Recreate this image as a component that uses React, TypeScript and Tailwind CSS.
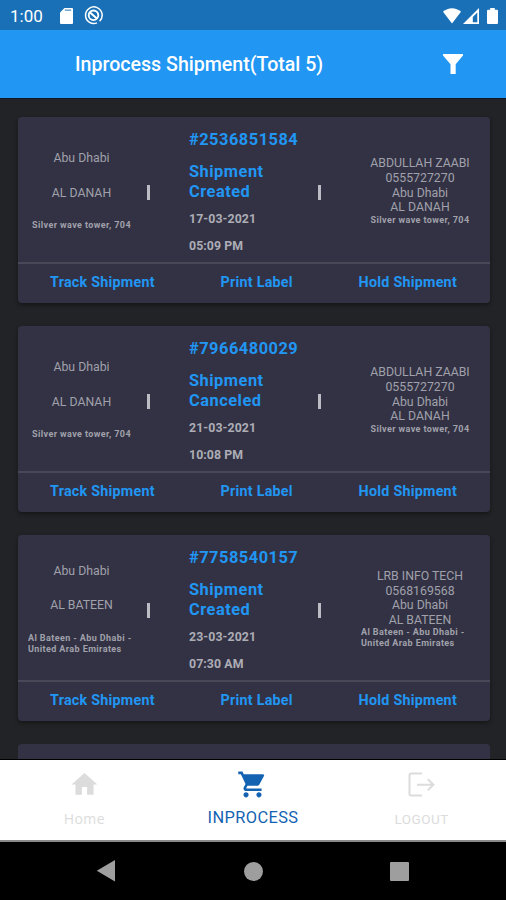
import React from 'react';
import { MdHome, MdShoppingCart } from 'react-icons/md';

interface Shipment {
  id: string;
  status: string;
  date: string;
  time: string;
  from: { city: string; area: string; address: string };
  to: { name: string; phone: string; city: string; area: string; address: string };
}

const shipments: Shipment[] = [
  {
    id: '2536851584',
    status: 'Shipment Created',
    date: '17-03-2021',
    time: '05:09 PM',
    from: { city: 'Abu Dhabi', area: 'AL DANAH', address: 'Silver wave tower, 704' },
    to: {
      name: 'ABDULLAH ZAABI',
      phone: '0555727270',
      city: 'Abu Dhabi',
      area: 'AL DANAH',
      address: 'Silver wave tower, 704',
    },
  },
  {
    id: '7966480029',
    status: 'Shipment Canceled',
    date: '21-03-2021',
    time: '10:08 PM',
    from: { city: 'Abu Dhabi', area: 'AL DANAH', address: 'Silver wave tower, 704' },
    to: {
      name: 'ABDULLAH ZAABI',
      phone: '0555727270',
      city: 'Abu Dhabi',
      area: 'AL DANAH',
      address: 'Silver wave tower, 704',
    },
  },
  {
    id: '7758540157',
    status: 'Shipment Created',
    date: '23-03-2021',
    time: '07:30 AM',
    from: {
      city: 'Abu Dhabi',
      area: 'AL BATEEN',
      address: 'Al Bateen - Abu Dhabi - United Arab Emirates',
    },
    to: {
      name: 'LRB INFO TECH',
      phone: '0568169568',
      city: 'Abu Dhabi',
      area: 'AL BATEEN',
      address: 'Al Bateen - Abu Dhabi - United Arab Emirates',
    },
  },
];

function StatusBar() {
  return (
    <div className="flex h-[30px] shrink-0 items-center bg-[#1a70b7] pl-[10px] pr-[8px] pt-[1px] text-white">
      <span className="w-[50px] pt-[1px] text-[17px] leading-none">1:00</span>
      <svg width="13" height="16" viewBox="0 0 13 16" fill="currentColor">
        <path d="M4.5 0H12a1 1 0 0 1 1 1v14a1 1 0 0 1-1 1H1a1 1 0 0 1-1-1V4.5z" />
        <path d="M4.8 2.2h6.4" stroke="#1a70b7" strokeOpacity="0.6" strokeWidth="1.6" />
      </svg>
      <svg className="ml-[11px]" width="19" height="19" viewBox="0 0 19 19" fill="none" stroke="currentColor">
        <path d="M15.6 15.2A8.3 8.3 0 1 0 13 16.9" strokeWidth="1.5" />
        <circle cx="9.5" cy="9.3" r="4.8" strokeWidth="1.9" />
        <path d="M5.8 6.2l7 6.2" strokeWidth="2" />
      </svg>
      <div className="flex-1" />
      <svg width="18" height="16" viewBox="0 0 18 16" fill="currentColor">
        <path d="M0 3.8C5-.9 13-.9 18 3.8L9 15.5z" />
      </svg>
      <svg className="ml-[2px]" width="16" height="16" viewBox="0 0 16 16" fill="currentColor" fillRule="evenodd">
        <path d="M16 0v16H0zM14.3 4.4L9.8 9v5.2h4.5z" />
      </svg>
      <svg className="ml-[8px]" width="11" height="16" viewBox="0 0 11 16" fill="currentColor">
        <path d="M3.2 0h4.6v1.8H10a1 1 0 0 1 1 1V15a1 1 0 0 1-1 1H1a1 1 0 0 1-1-1V2.8a1 1 0 0 1 1-1h2.2z" />
      </svg>
    </div>
  );
}

function Header() {
  return (
    <header className="flex h-[69px] shrink-0 items-center justify-between border-b border-[#101826] bg-[#2196f3] pl-[75px] pr-[43px] text-white">
      <h1 className="pt-[2px] text-[19.6px] font-medium leading-none">Inprocess Shipment(Total 5)</h1>
      <svg width="20" height="20" viewBox="0 0 20 20" fill="currentColor">
        <path d="M0 0h20v1.6l-7.3 8.6V20H7.5v-9.8L0 1.6z" />
      </svg>
    </header>
  );
}

function Divider() {
  return <div className="mt-[5px] h-[15px] w-[3px] bg-[#bcbcc4]" />;
}

function ShipmentCard({ shipment }: { shipment: Shipment }) {
  const { from, to } = shipment;

  return (
    <article className="h-[186px] shrink-0 rounded-[4px] bg-[#323244] shadow-[0_2px_4px_rgba(0,0,0,0.4)]">
      <div className="flex h-[147px] items-center border-b-2 border-[#484859]">
        <div className="ml-[10px] flex w-[107px] flex-col items-center gap-5 pt-[3px] text-[12.3px] leading-[14.6px] text-[#a1a1ab]">
          <p>{from.city}</p>
          <p>{from.area}</p>
          <p className="text-[9px] font-bold leading-[10.7px] tracking-[0.4px]">{from.address}</p>
        </div>
        <div className="ml-[12px]">
          <Divider />
        </div>
        <div className="ml-[39px] w-[129px] self-start pt-[13px] font-bold text-[#2196f3]">
          <p className="text-[16.4px] leading-[20px] tracking-[0.5px]">#{shipment.id}</p>
          <p className="mt-[12px] w-[90px] text-[16.4px] leading-[19.5px] tracking-[0.5px]">{shipment.status}</p>
          <p className="mt-[11px] text-[12.3px] leading-[15px] tracking-[0.1px] text-[#adadb6]">{shipment.date}</p>
          <p className="mt-[12px] text-[12.3px] leading-[15px] tracking-[0.1px] text-[#adadb6]">{shipment.time}</p>
        </div>
        <Divider />
        <div className="ml-[40px] flex w-[118px] flex-col items-center pt-[3px] text-[12.3px] leading-[14.6px] text-[#a1a1ab]">
          <p>{to.name}</p>
          <p>{to.phone}</p>
          <p>{to.city}</p>
          <p>{to.area}</p>
          <p className="text-[9px] font-bold leading-[10.7px] tracking-[0.4px]">{to.address}</p>
        </div>
      </div>
      <div className="flex justify-between pl-[32px] pr-[33px] pt-[9px] text-[14.3px] font-bold leading-[18px] tracking-[0.25px] text-[#2196f3]">
        <button>Track Shipment</button>
        <button>Print Label</button>
        <button>Hold Shipment</button>
      </div>
    </article>
  );
}

function TabBar() {
  return (
    <nav className="grid h-[83px] shrink-0 grid-cols-3 border-b-2 border-t border-b-[#8a8a8a] border-t-black bg-white text-[#dcdcdc]">
      <button className="flex flex-col items-center pt-[9px]">
        <MdHome size={31} />
        <span className="mt-[10px] font-['Open_Sans'] text-[14px] leading-[18px] tracking-[0.4px]">Home</span>
      </button>
      <button className="flex flex-col items-center pt-[9px] text-[#1463b3]">
        <MdShoppingCart size={31} />
        <span className="mt-[9px] text-[16.4px] leading-[18px] tracking-[0.4px]">INPROCESS</span>
      </button>
      <button className="flex flex-col items-center pt-[12px]">
        <svg width="27" height="26" viewBox="0 0 27 26" fill="none" stroke="currentColor" strokeWidth="2">
          <path d="M14 1.5H3a1.5 1.5 0 0 0-1.5 1.5v19A1.5 1.5 0 0 0 3 23.5h11M9 12.8h16.5M19.8 7.3l5.7 5.5-5.7 5.5" />
        </svg>
        <span className="mt-[12px] text-[13.5px] leading-[18px] tracking-[0.5px]">LOGOUT</span>
      </button>
    </nav>
  );
}

function SystemNav() {
  return (
    <div className="flex h-[58px] shrink-0 items-center justify-between bg-black pl-[96px] pr-[97px] text-[#9e9e9e]">
      <svg width="19" height="22" viewBox="0 0 19 22" fill="currentColor">
        <path d="M19 0v21.5L.8 10.8z" />
      </svg>
      <div className="ml-[2px] size-[19px] rounded-full bg-[#9e9e9e]" />
      <div className="size-[19px] rounded-[1px] bg-[#9e9e9e]" />
    </div>
  );
}

export default function App() {
  return (
    <div className="flex h-[900px] w-[506px] flex-col overflow-hidden bg-[#222326] font-['Roboto',sans-serif]">
      <StatusBar />
      <Header />
      <main className="flex min-h-0 flex-1 flex-col gap-[23px] overflow-hidden pl-[18px] pr-4 pt-[18px]">
        {shipments.map((shipment) => (
          <ShipmentCard key={shipment.id} shipment={shipment} />
        ))}
        {/* next card, cut off by the tab bar */}
        <div className="h-[186px] shrink-0 rounded-[4px] bg-[#323244]" />
      </main>
      <TabBar />
      <SystemNav />
    </div>
  );
}
